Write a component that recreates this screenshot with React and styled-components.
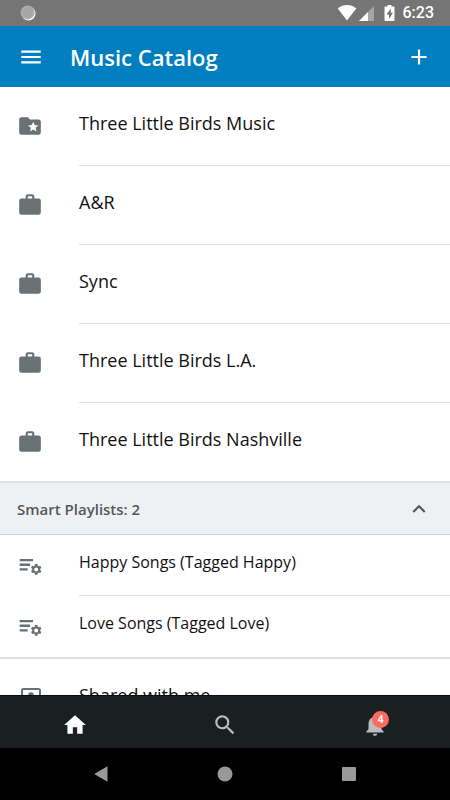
import React, { useState } from "react";
import styled, { createGlobalStyle } from "styled-components";
import {
  MdAdd,
  MdFolderSpecial,
  MdHome,
  MdKeyboardArrowUp,
  MdMenu,
  MdNotifications,
  MdSearch,
  MdWork,
} from "react-icons/md";

const CATALOG_ITEMS = [
  { id: 1, title: "Three Little Birds Music", Icon: MdFolderSpecial },
  { id: 2, title: "A&R", Icon: MdWork },
  { id: 3, title: "Sync", Icon: MdWork },
  { id: 4, title: "Three Little Birds L.A.", Icon: MdWork },
  { id: 5, title: "Three Little Birds Nashville", Icon: MdWork },
];

const SMART_PLAYLISTS = [
  { id: 1, title: "Happy Songs (Tagged Happy)" },
  { id: 2, title: "Love Songs (Tagged Love)" },
];

const GlobalStyle = createGlobalStyle`
  * {
    box-sizing: border-box;
  }

  body {
    margin: 0;
    background: #fff;
    font-family: "Open Sans", sans-serif;
    color: #1a1a1a;
  }

  button {
    border: 0;
    padding: 0;
    background: none;
    color: inherit;
    font: inherit;
    cursor: pointer;
  }
`;

const Screen = styled.div`
  display: flex;
  flex-direction: column;
  height: 100vh;
  overflow: hidden;
`;

const StatusBar = styled.div`
  display: flex;
  flex: none;
  align-items: center;
  justify-content: space-between;
  height: 26px;
  padding: 0 16px 0 20px;
  background: #757575;
  color: #fff;
`;

const StatusIcons = styled.div`
  display: flex;
  align-items: center;
`;

const Clock = styled.time`
  margin-left: 8px;
  font-family: Roboto, sans-serif;
  font-size: 16px;
  font-weight: 500;
  line-height: 26px;
`;

const Header = styled.header`
  display: flex;
  flex: none;
  align-items: center;
  height: 61px;
  padding: 0 18px;
  background: #007fc0;
  color: #fff;
`;

const HeaderButton = styled.button`
  display: flex;
`;

const HeaderTitle = styled.h1`
  flex: 1;
  margin: 0 0 0 26px;
  font-size: 22px;
  font-weight: 600;
  line-height: 30px;
`;

const Content = styled.main`
  flex: 1;
  min-height: 0;
  overflow: hidden;
`;

const List = styled.ul`
  margin: 0;
  padding: 0;
  list-style: none;
`;

const Row = styled.li`
  height: ${({ $compact }) => ($compact ? "61px" : "79px")};

  &:last-child {
    height: ${({ $compact }) => ($compact ? "61px" : "78px")};
  }
`;

const RowLink = styled.a`
  display: flex;
  height: 100%;
  padding-left: 17px;
  color: #6a7175;
  text-decoration: none;
`;

const RowIcon = styled.span`
  flex: none;
  width: 26px;
  height: 26px;
  margin: ${({ $compact }) => ($compact ? "18px" : "26px")} 36px 0 0;
`;

const RowTitle = styled.span`
  flex: 1;
  padding-top: ${({ $compact }) => ($compact ? "15px" : "24px")};
  border-bottom: 1px solid #dedfe0;
  color: #111;
  font-size: ${({ $compact }) => ($compact ? "16px" : "18px")};
  line-height: 24px;

  ${Row}:last-child & {
    border-bottom: 0;
  }
`;

const SectionToggle = styled.button`
  display: flex;
  align-items: center;
  justify-content: space-between;
  width: 100%;
  height: 54px;
  padding: 0 18px 0 17px;
  border-top: 2px solid #e0e1e2;
  border-bottom: 1px solid #cfd1d2;
  background: #eff0f2;
  color: #53585c;
  font-size: 15px;
  font-weight: 600;
`;

const SharedList = styled(List)`
  border-top: 2px solid #e0e1e2;
`;

const TabBar = styled.nav`
  display: flex;
  flex: none;
  height: 53px;
  background: #192022;
  border-top: 1px solid #080c0d;
`;

const Tab = styled.a`
  display: flex;
  flex: 1;
  align-items: center;
  justify-content: center;
  padding-top: 6px;
  color: ${({ $active }) => ($active ? "#fff" : "#bbbcbd")};
`;

const BadgeAnchor = styled.span`
  position: relative;
  display: flex;
`;

const Badge = styled.span`
  position: absolute;
  top: -1px;
  right: -1px;
  width: 17px;
  height: 17px;
  border-radius: 50%;
  background: #ff695e;
  color: #fff;
  font-size: 10px;
  font-weight: 700;
  line-height: 17px;
  text-align: center;
`;

const SystemNav = styled.div`
  display: flex;
  flex: none;
  justify-content: center;
  gap: 98px;
  height: 52px;
  background: #000;
  color: #999;
`;

const SystemButton = styled.button`
  display: flex;
  align-items: center;
  justify-content: center;
  width: 26px;
`;

const SyncSpinner = () => (
  <svg width="16" height="16" viewBox="0 0 16 16">
    <circle cx="8.5" cy="8.5" r="7" fill="#fff" />
    <circle cx="7.6" cy="7.4" r="7" fill="#a6a6a6" />
    <circle
      cx="7.6"
      cy="7.4"
      r="6"
      fill="none"
      stroke="#c4c4c4"
      strokeWidth="1"
      strokeDasharray="1 1"
    />
  </svg>
);

const SignalIcons = () => (
  <svg width="58" height="18" viewBox="0 0 58 18" fill="#fff">
    <path d="M.7 4.4C6-.1 14-.1 19.3 4.4L10 16.4z" />
    <path d="M37 2v15H22z" opacity=".35" />
    <path d="M31 8v9h-9z" />
    <path d="M48.500 2.500h2V1h4v1.500h2c.6 0 1 .4 1 1V16c0 .6-.4 1-1 1h-8c-.6 0-1-.4-1-1V3.500c0-.6.4-1 1-1z" />
    <path d="M53.800 4.500l-4.300 6H52v4.500l4-6.200h-2.200z" fill="#757575" />
  </svg>
);

const PlaylistIcon = () => (
  <svg width="26" height="26" viewBox="0 0 26 26" fill="currentColor">
    <path d="M2.700 6h13.300v2.300H2.700zM2.700 10.600h10.300v2.300H2.700zM2.700 15.200h8v2.300h-8z" />
    <g transform="translate(12.600 9.800) scale(.55)">
      <path d="M19.140 12.940c.04-.3.06-.61.06-.94 0-.32-.02-.64-.07-.94l2.030-1.580c.18-.14.23-.41.12-.61l-1.920-3.320c-.12-.22-.37-.29-.59-.22l-2.390.96c-.5-.38-1.030-.7-1.620-.94l-.36-2.540c-.04-.24-.24-.41-.48-.41h-3.840c-.24 0-.43.17-.47.41l-.36 2.540c-.59.24-1.130.57-1.620.94l-2.390-.96c-.22-.08-.47 0-.59.22L2.740 8.870c-.12.21-.08.47.12.61l2.030 1.580c-.05.3-.09.63-.09.94s.02.64.07.94l-2.030 1.580c-.18.14-.23.41-.12.61l1.920 3.320c.12.22.37.29.59.22l2.390-.96c.5.38 1.030.7 1.620.94l.36 2.540c.05.24.24.41.48.41h3.840c.24 0 .44-.17.47-.41l.36-2.540c.59-.24 1.130-.56 1.620-.94l2.390.96c.22.08.47 0 .59-.22l1.920-3.320c.12-.22.07-.47-.12-.61l-2.010-1.580zM12 15.600c-1.980 0-3.600-1.620-3.600-3.600s1.620-3.600 3.600-3.600 3.600 1.620 3.600 3.600-1.620 3.600-3.600 3.600z" />
    </g>
  </svg>
);

const SharedIcon = () => (
  <svg width="26" height="26" viewBox="0 0 26 26" fill="currentColor">
    <rect
      x="5"
      y="4"
      width="18"
      height="18"
      rx="1.500"
      fill="none"
      stroke="currentColor"
      strokeWidth="2"
    />
    <circle cx="14" cy="10" r="2.800" />
    <path d="M8 19c0-3 3-4.500 6-4.500s6 1.500 6 4.500z" />
  </svg>
);

function App() {
  const [isOpen, setIsOpen] = useState(true);

  return (
    <>
      <GlobalStyle />
      <Screen>
        <StatusBar>
          <SyncSpinner />
          <StatusIcons>
            <SignalIcons />
            <Clock>6:23</Clock>
          </StatusIcons>
        </StatusBar>
        <Header>
          <HeaderButton aria-label="Menu">
            <MdMenu size={26} />
          </HeaderButton>
          <HeaderTitle>Music Catalog</HeaderTitle>
          <HeaderButton aria-label="Add">
            <MdAdd size={26} />
          </HeaderButton>
        </Header>
        <Content>
          <List>
            {CATALOG_ITEMS.map(({ id, title, Icon }) => (
              <Row key={id}>
                <RowLink href="#">
                  <RowIcon>
                    <Icon size={26} />
                  </RowIcon>
                  <RowTitle>{title}</RowTitle>
                </RowLink>
              </Row>
            ))}
          </List>
          <SectionToggle
            aria-expanded={isOpen}
            onClick={() => setIsOpen(!isOpen)}
          >
            Smart Playlists: {SMART_PLAYLISTS.length}
            <MdKeyboardArrowUp size={26} />
          </SectionToggle>
          {isOpen && (
            <List>
              {SMART_PLAYLISTS.map(({ id, title }) => (
                <Row key={id} $compact>
                  <RowLink href="#">
                    <RowIcon $compact>
                      <PlaylistIcon />
                    </RowIcon>
                    <RowTitle $compact>{title}</RowTitle>
                  </RowLink>
                </Row>
              ))}
            </List>
          )}
          <SharedList>
            <Row>
              <RowLink href="#">
                <RowIcon>
                  <SharedIcon />
                </RowIcon>
                <RowTitle>Shared with me</RowTitle>
              </RowLink>
            </Row>
          </SharedList>
        </Content>
        <TabBar>
          <Tab href="#" $active aria-label="Home">
            <MdHome size={26} />
          </Tab>
          <Tab href="#" aria-label="Search">
            <MdSearch size={26} />
          </Tab>
          <Tab href="#" aria-label="Notifications">
            <BadgeAnchor>
              <MdNotifications size={26} />
              <Badge>4</Badge>
            </BadgeAnchor>
          </Tab>
        </TabBar>
        <SystemNav>
          <SystemButton aria-label="Back">
            <svg width="14" height="16" viewBox="0 0 14 16" fill="currentColor">
              <path d="M13.500 1v14c0 .4-.4.500-.8.300L1 8.500c-.4-.3-.4-.7 0-1L12.700.7c.4-.2.8-.1.8.3z" />
            </svg>
          </SystemButton>
          <SystemButton aria-label="Home screen">
            <svg width="16" height="16" viewBox="0 0 16 16" fill="currentColor">
              <circle cx="8" cy="8" r="7.500" />
            </svg>
          </SystemButton>
          <SystemButton aria-label="Recent apps">
            <svg width="14" height="14" viewBox="0 0 14 14" fill="currentColor">
              <rect width="14" height="14" rx="1" />
            </svg>
          </SystemButton>
        </SystemNav>
      </Screen>
    </>
  );
}

export default App;
